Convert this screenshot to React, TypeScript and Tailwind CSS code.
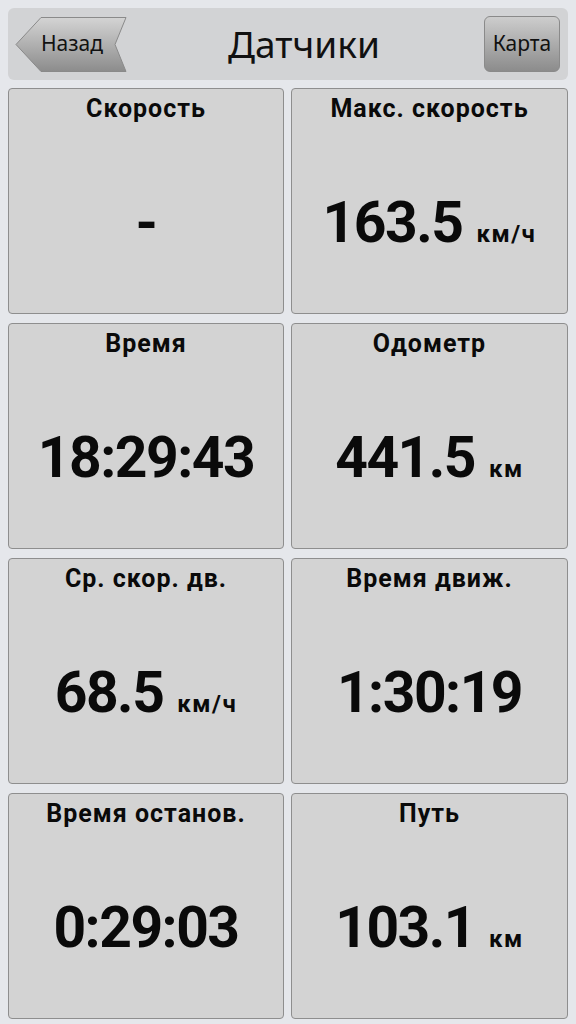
import React from "react";

const cards: { title: string; value: string; unit?: string }[] = [
  { title: "Скорость", value: "-" },
  { title: "Макс. скорость", value: "163.5", unit: "км/ч" },
  { title: "Время", value: "18:29:43" },
  { title: "Одометр", value: "441.5", unit: "км" },
  { title: "Ср. скор. дв.", value: "68.5", unit: "км/ч" },
  { title: "Время движ.", value: "1:30:19" },
  { title: "Время останов.", value: "0:29:03" },
  { title: "Путь", value: "103.1", unit: "км" },
];

function BackButton() {
  return (
    <div className="relative w-[114px] h-[57px]">
      <svg className="absolute inset-0" width="114" height="57" viewBox="0 0 114 57">
        <defs>
          <linearGradient id="bg1" x1="0" y1="0" x2="0" y2="1">
            <stop offset="0" stopColor="#d4d4d4" />
            <stop offset="1" stopColor="#8c8c8c" />
          </linearGradient>
        </defs>
        <path
          d="M2 28.5 L27 1.5 L112 1.5 L101 28.5 L112 55.5 L27 55.5 Z"
          fill="url(#bg1)"
          stroke="#8a8a8a"
          strokeWidth="1"
          strokeLinejoin="round"
        />
      </svg>
      <div className="relative flex h-full items-center pl-[27px] text-[21px] text-[#111] font-['Noto_Sans',sans-serif]">
        Назад
      </div>
    </div>
  );
}

export default function App() {
  return (
    <div className="w-[576px] h-[1024px] bg-[#e5e7eb] flex flex-col px-[8px] pt-[8px] gap-[8px] font-['Roboto',sans-serif] overflow-hidden">
      <div className="h-[72px] rounded-[6px] bg-[#d2d3d5] flex items-center justify-between pl-[6px] pr-[8px]">
        <BackButton />
        <div className="text-[37px] text-[#111] font-['Noto_Sans',sans-serif] leading-none pb-[2px] -ml-[4px]">
          Датчики
        </div>
        <div className="w-[76px] h-[56px] rounded-[6px] border border-[#8a8a8a] bg-gradient-to-b from-[#cdcdcd] to-[#8c8c8c] flex items-center justify-center text-[21px] text-[#111] font-['Noto_Sans',sans-serif]">
          Карта
        </div>
      </div>
      <div className="grid grid-cols-[276px_277px] gap-x-[7px] gap-y-[9px]">
        {cards.map((c, i) => (
          <div
            key={i}
            className="h-[226px] rounded-[4px] border border-[#8e8e8e] bg-[#d3d3d3] flex flex-col"
          >
            <div className="h-[38px] flex items-center justify-center text-[25px] font-bold tracking-[1px] text-[#0a0a0a] leading-none pt-[1px]">
              {c.title}
            </div>
            <div className="flex-1 flex items-center justify-center pt-[4px]">
              <div className="flex items-baseline text-[#0a0a0a] font-bold">
                <span className="text-[57px] leading-none tracking-[-1.5px]">{c.value}</span>
                {c.unit && (
                  <span className="text-[24px] leading-none tracking-[1.5px] ml-[14px]">{c.unit}</span>
                )}
              </div>
            </div>
          </div>
        ))}
      </div>
    </div>
  );
}
